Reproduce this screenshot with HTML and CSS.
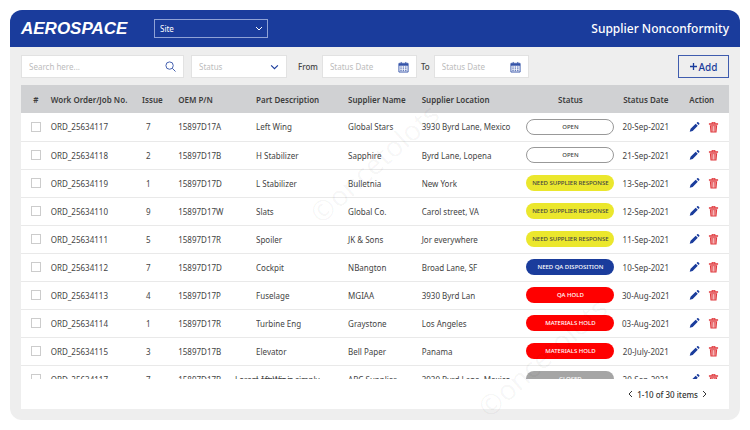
FILE: index.html
```html
<!DOCTYPE html>
<html lang="en">
<head>
    <meta charset="UTF-8">
    <meta name="viewport" content="width=device-width, initial-scale=1.0">
    <title>Supplier Nonconformity</title>
    <link rel="stylesheet" href="styles.css">
</head>
<body>
    <svg class="sprite" aria-hidden="true">
        <symbol id="pencil" viewBox="0 0 12 12">
            <path d="M.8 11.200l.9-3.200 5.600-5.600 2.300 2.300L4 10.300z M8.200 1.600l.8-.8c.4-.4.9-.4 1.200 0l1 1c.4.4.4.8 0 1.200l-.8.8z"/>
        </symbol>
        <symbol id="trash" viewBox="0 0 12 12">
            <path d="M1 2h3V.5h4V2h3v1.500H1zM5 1.300V2h2v-.7z" fill="currentColor" fill-rule="evenodd"/>
            <path d="M2 4h8l-.7 8H2.700z" fill="currentColor"/>
            <path d="M4.300 5l.2 6M6 5v6M7.700 5l-.2 6" fill="none" stroke="#fff" stroke-width=".7"/>
        </symbol>
        <symbol id="calendar" viewBox="0 0 12 12">
            <path d="M1 2h10v9.500H1z" fill="none" stroke="currentColor"/>
            <path d="M1 3.500h10" stroke="currentColor" stroke-width="2"/>
            <path d="M3.500 .5v2M8.500 .5v2" stroke="currentColor"/>
            <path d="M2.500 6h7M2.500 8h7M2.500 10h7" fill="none" stroke="currentColor" stroke-dasharray="1.600 1"/>
        </symbol>
    </svg>

    <div class="card">
        <header class="topbar">
            <a class="logo" href="#">AEROSPACE</a>
            <select class="site-select" aria-label="Site">
                <option>Site</option>
            </select>
            <h1>Supplier Nonconformity</h1>
        </header>

        <main>
            <form class="filters">
                <div class="field search">
                    <input type="text" placeholder="Search here..." aria-label="Search">
                    <svg class="icon" viewBox="0 0 12 12"><circle cx="5" cy="5" r="4"/><path d="M8 8l3.500 3.500"/></svg>
                </div>
                <select class="status-select" aria-label="Status">
                    <option>Status</option>
                </select>
                <label for="fromDate">From</label>
                <div class="field date">
                    <input type="text" id="fromDate" placeholder="Status Date">
                    <svg class="icon"><use href="#calendar"/></svg>
                </div>
                <label for="toDate">To</label>
                <div class="field date">
                    <input type="text" id="toDate" placeholder="Status Date">
                    <svg class="icon"><use href="#calendar"/></svg>
                </div>
                <button type="button" class="add-btn"><svg viewBox="0 0 8 8"><path d="M4 0v8M0 4h8"/></svg>Add</button>
            </form>

            <div class="panel">
                <div class="table-wrap">
                    <table>
                        <colgroup>
                            <col class="col-check">
                            <col class="col-order">
                            <col class="col-issue">
                            <col class="col-oem">
                            <col class="col-part">
                            <col class="col-name">
                            <col class="col-location">
                            <col class="col-status">
                            <col class="col-date">
                            <col class="col-action">
                        </colgroup>
                        <thead>
                            <tr>
                                <th class="check">#</th>
                                <th>Work Order/Job No.</th>
                                <th>Issue</th>
                                <th>OEM P/N</th>
                                <th>Part Description</th>
                                <th>Supplier Name</th>
                                <th>Supplier Location</th>
                                <th class="status">Status</th>
                                <th class="day">Status Date</th>
                                <th>Action</th>
                            </tr>
                        </thead>
                        <tbody id="orders"></tbody>
                    </table>
                </div>
                <footer class="pager">
                    <button type="button" aria-label="Previous page"><svg viewBox="0 0 5 8"><path d="M4 1L1 4l3 3"/></svg></button>
                    <span>1-10 of 30 items</span>
                    <button type="button" aria-label="Next page"><svg viewBox="0 0 5 8"><path d="M1 1l3 3-3 3"/></svg></button>
                </footer>
            </div>
        </main>
    </div>

    <div class="watermark mark-center" aria-hidden="true">©oncetolots</div>
    <div class="watermark mark-bottom" aria-hidden="true">©oncetolots</div>

    <script src="script.js"></script>
</body>
</html>
```

FILE: styles.css
```css
* {
    box-sizing: border-box;
}
body {
    position: relative;
    margin: 0;
    padding: 10px;
    height: 100vh;
    display: flex;
    overflow: hidden;
    background: #fff;
    color: #444;
    font-family: "Noto Sans", "Open Sans", sans-serif;
    font-size: 8px;
}
input, select, button {
    font-family: inherit;
    font-size: 8px;
    border-radius: 0;
}
.sprite {
    display: none;
}
.card {
    flex: 1;
    min-width: 0;
    display: flex;
    flex-direction: column;
    border-radius: 12px;
    overflow: hidden;
    background: #eee;
}

/* top bar */
.topbar {
    display: flex;
    align-items: center;
    height: 37px;
    padding: 0 11px;
    background: #1a3c9c;
    color: #fff;
}
.logo {
    width: 133px;
    color: #fff;
    font-family: "Liberation Sans", Arial, sans-serif;
    font-size: 17px;
    font-weight: bold;
    font-style: italic;
    text-decoration: none;
}
.topbar h1 {
    margin: 0 0 0 auto;
    font-size: 12px;
    font-weight: 500;
}
select {
    appearance: none;
}
.site-select {
    width: 114px;
    height: 19px;
    padding: 0 5px;
    border: 1px solid #8fa2d6;
    color: #fff;
    background: url("data:image/svg+xml,%3Csvg xmlns='http://www.w3.org/2000/svg' viewBox='0 0 8 5'%3E%3Cpath d='M1 1l3 3 3-3' fill='none' stroke='white'/%3E%3C/svg%3E") no-repeat right 4px center / 8px 5px;
}

/* filters */
main {
    flex: 1;
    min-height: 0;
    display: flex;
    flex-direction: column;
    padding: 8px 11px 11px;
}
.filters {
    display: flex;
    align-items: center;
    margin-bottom: 7px;
}
.field {
    display: flex;
    align-items: center;
    height: 23px;
    padding: 0 7px;
    background: #fff;
    border: 1px solid #e2e2e2;
}
.field input {
    flex: 1;
    min-width: 0;
    padding: 0;
    border: none;
    outline: none;
    background: none;
}
.field input::placeholder {
    color: #bcbcbc;
}
.icon {
    width: 12px;
    height: 12px;
    color: #3453a8;
}
.search {
    width: 163px;
}
.search .icon {
    width: 11px;
    height: 11px;
    fill: none;
    stroke: #3453a8;
}
.status-select {
    width: 96px;
    height: 23px;
    margin: 0 7px;
    padding: 0 7px;
    border: 1px solid #e2e2e2;
    color: #bcbcbc;
    background: #fff url("data:image/svg+xml,%3Csvg xmlns='http://www.w3.org/2000/svg' viewBox='0 0 8 5'%3E%3Cpath d='M1 1l3 3 3-3' fill='none' stroke='%231a3c9c'/%3E%3C/svg%3E") no-repeat right 7px center / 9px 6px;
}
.filters label {
    margin: 0 4px;
    font-weight: 500;
}
.date {
    width: 95px;
}
.date .icon {
    width: 11px;
}
.add-btn {
    display: flex;
    align-items: center;
    justify-content: center;
    gap: 2px;
    width: 51px;
    height: 23px;
    margin-left: auto;
    padding: 0;
    border: 1px solid #3f5cae;
    background: none;
    color: #1a3c9c;
    font-size: 10px;
    font-weight: 500;
}
.add-btn svg {
    width: 7px;
    height: 7px;
    fill: none;
    stroke: #1a3c9c;
    stroke-width: 1.500;
}

/* table */
.panel {
    flex: 1;
    min-height: 0;
    display: flex;
    flex-direction: column;
    background: #fff;
}
.table-wrap {
    flex: 1;
    min-height: 0;
    overflow: hidden;
}
table {
    width: 100%;
    table-layout: fixed;
    border-collapse: collapse;
}
.col-check { width: 4.2%; }
.col-order { width: 12.9%; }
.col-issue { width: 5.1%; }
.col-oem { width: 11%; }
.col-part { width: 13%; }
.col-name { width: 10.4%; }
.col-location { width: 14.8%; }
.col-status { width: 13.4%; }
.col-date { width: 9.6%; }
.col-action { width: 5.6%; }
th, td {
    height: 28px;
    padding: 0;
    text-align: left;
    white-space: nowrap;
}
th {
    background: #d0d1d3;
    color: #3c3c3c;
    font-weight: 600;
}
td {
    border-bottom: 1px solid #e9e9e9;
}
.check {
    text-align: center;
}
.check input {
    appearance: none;
    display: block;
    width: 10px;
    height: 10px;
    margin: 0 auto;
    border: 1px solid #ccc;
    background: #fff;
}
.issue {
    padding-left: 4px;
}
.part {
    position: relative;
}
.part span {
    display: block;
    max-width: 45px;
    overflow: hidden;
}
.part .note {
    position: absolute;
    top: 8px;
    left: -21px;
    max-width: none;
}
.status {
    padding-right: 7px;
    text-align: center;
}
.day {
    padding-right: 19px;
    text-align: center;
}
.badge {
    display: block;
    height: 16px;
    border: 1px solid transparent;
    border-radius: 8px;
    font-size: 6px;
    font-weight: 500;
    line-height: 14px;
}
.badge.open {
    border-color: #999;
    background: #fff;
}
.badge.response {
    background: #ebe72d;
}
.badge.disposition {
    background: #1a3c9c;
    color: #fff;
}
.badge.hold {
    background: #f00;
    color: #fff;
}
.badge.closed {
    background: #a5a5a5;
    color: #fff;
}
.actions {
    display: flex;
    gap: 8px;
}
.actions button, .pager button {
    display: flex;
    padding: 0;
    border: none;
    background: none;
    cursor: pointer;
}
.actions svg {
    width: 11px;
    height: 12px;
}
.edit {
    color: #1a3c9c;
    fill: currentColor;
}
.delete {
    color: #e03a3e;
}

/* pager */
.pager {
    display: flex;
    align-items: center;
    justify-content: flex-end;
    gap: 4px;
    height: 30px;
    padding-right: 22px;
    color: #333;
    font-weight: 500;
}
.pager svg {
    width: 5px;
    height: 8px;
    fill: none;
    stroke: #333;
}

/* watermark */
.watermark {
    position: absolute;
    color: rgba(0, 0, 0, 0.04);
    font-size: 28px;
    pointer-events: none;
    transform: rotate(-42deg);
    transform-origin: left center;
}
.mark-center {
    top: 198px;
    left: 314px;
}
.mark-bottom {
    top: 392px;
    left: 482px;
}
```

FILE: script.js
```js
const orders = [
    ['ORD_25634117', 7, '15897D17A', 'Left Wing', 'Global Stars', '3930 Byrd Lane, Mexico', 'open', 'OPEN', '20-Sep-2021'],
    ['ORD_25634118', 2, '15897D17B', 'H Stabilizer', 'Sapphire', 'Byrd Lane, Lopena', 'open', 'OPEN', '21-Sep-2021'],
    ['ORD_25634119', 1, '15897D17D', 'L Stabilizer', 'Bulletnia', 'New York', 'response', 'NEED SUPPLIER RESPONSE', '13-Sep-2021'],
    ['ORD_25634110', 9, '15897D17W', 'Slats', 'Global Co.', 'Carol street, VA', 'response', 'NEED SUPPLIER RESPONSE', '12-Sep-2021'],
    ['ORD_25634111', 5, '15897D17R', 'Spoiler', 'JK & Sons', 'Jor everywhere', 'response', 'NEED SUPPLIER RESPONSE', '11-Sep-2021'],
    ['ORD_25634112', 7, '15897D17D', 'Cockpit', 'NBangton', 'Broad Lane, SF', 'disposition', 'NEED QA DISPOSITION', '10-Sep-2021'],
    ['ORD_25634113', 4, '15897D17P', 'Fuselage', 'MGIAA', '3930 Byrd Lan', 'hold', 'QA HOLD', '30-Aug-2021'],
    ['ORD_25634114', 1, '15897D17R', 'Turbine Eng', 'Graystone', 'Los Angeles', 'hold', 'MATERIALS HOLD', '03-Aug-2021'],
    ['ORD_25634115', 3, '15897D17B', 'Elevator', 'Bell Paper', 'Panama', 'hold', 'MATERIALS HOLD', '20-July-2021'],
    ['ORD_25634117', 7, '15897D17B', 'Left Wing', 'ABC Supplier', '3930 Byrd Lane, Mexico', 'closed', 'CLOSED', '20-Sep-2021', 'Lorem Ipsum is simply']
];

document.getElementById('orders').innerHTML = orders.map(([id, issue, oem, part, name, location, type, status, date, note]) => `
    <tr>
        <td class="check"><input type="checkbox" aria-label="Select ${id}"></td>
        <td>${id}</td>
        <td class="issue">${issue}</td>
        <td>${oem}</td>
        <td class="part"><span>${part}</span>${note ? `<span class="note">${note}</span>` : ''}</td>
        <td>${name.replace('&', '&amp;')}</td>
        <td>${location}</td>
        <td class="status"><span class="badge ${type}">${status}</span></td>
        <td class="day">${date}</td>
        <td>
            <div class="actions">
                <button type="button" class="edit" aria-label="Edit"><svg><use href="#pencil"/></svg></button>
                <button type="button" class="delete" aria-label="Delete"><svg><use href="#trash"/></svg></button>
            </div>
        </td>
    </tr>`).join('');
```
